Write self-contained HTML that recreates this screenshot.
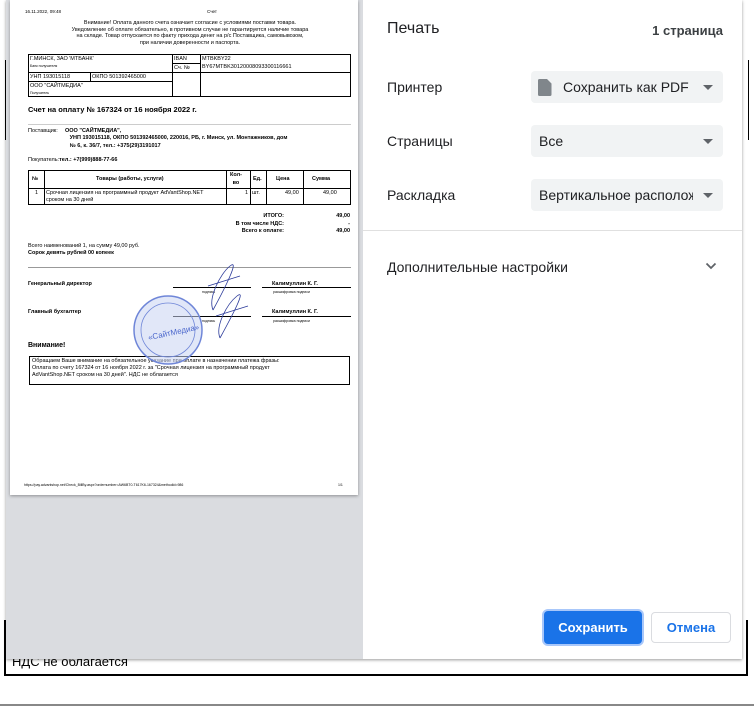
<!DOCTYPE html>
<html><head><meta charset="utf-8"><style>
*{margin:0;padding:0;box-sizing:border-box}
body{width:754px;height:706px;overflow:hidden;background:#fff;position:relative;font-family:"Liberation Sans",sans-serif;color:#202124}
.a{position:absolute;white-space:nowrap}
.doc{font-family:"Liberation Sans",sans-serif;color:#000}
.t{position:absolute;font-size:6px;line-height:7px;white-space:nowrap}
.b{font-weight:bold}
.bx{position:absolute;border:1px solid #000}
.sel{position:absolute;left:531px;width:192px;height:32px;background:#f1f3f4;border-radius:4px;font-size:14px;line-height:32px;padding-left:8px;color:#202124;overflow:hidden;white-space:nowrap}
.sel:after{content:"";position:absolute;right:10px;top:14px;border-left:5px solid transparent;border-right:5px solid transparent;border-top:5px solid #5f6368}
.lbl{position:absolute;left:387px;font-size:14px;color:#202124}
</style></head><body>
<div class="a" style="left:4px;top:620px;width:744px;height:56px;border:2px solid #000;border-top:none"></div>
<div class="a" style="left:12px;top:654px;font-size:13px;color:#000">НДС не облагается</div>
<div class="a" style="left:0;top:704px;width:754px;height:2px;background:#888"></div>
<div class="a" style="left:5px;top:60px;width:1px;height:80px;background:#000"></div>
<div class="a" style="left:748px;top:60px;width:1px;height:80px;background:#000"></div>
<div class="a" style="left:6px;top:0;width:736px;height:659px;background:#fff;box-shadow:0 1px 3px rgba(0,0,0,.4)"></div>
<div class="a" style="left:6px;top:0;width:357px;height:659px;background:#dadce0"></div>
<div class="a doc" style="left:10px;top:0;width:348px;height:495px;background:#fff;box-shadow:0 1px 3px rgba(0,0,0,.35)">
 <div class="t" style="left:15px;top:8px;font-size:4.5px">16.11.2022, 09:48</div>
 <div class="t" style="left:197px;top:8px;font-size:4.5px">Счет</div>
 <div class="t" style="left:20px;top:20px;width:320px;text-align:center;font-size:5.5px;line-height:6.7px;white-space:normal">Внимание! Оплата данного счета означает согласие с условиями поставки товара.<br>Уведомление об оплате обязательно, в противном случае не гарантируется наличие товара<br>на складе. Товар отпускается по факту прихода денег на р/с Поставщика, самовывозом,<br>при наличии доверенности и паспорта.</div>
 <div class="bx" style="left:18px;top:54px;width:323px;height:43px;border-width:1px"></div>
 <div class="a" style="left:162px;top:54px;width:1px;height:43px;background:#000"></div>
 <div class="a" style="left:190px;top:54px;width:1px;height:43px;background:#000"></div>
 <div class="a" style="left:18px;top:72px;width:323px;height:1px;background:#000"></div>
 <div class="a" style="left:162px;top:63px;width:28px;height:1px;background:#000"></div>
 <div class="a" style="left:18px;top:81px;width:144px;height:1px;background:#000"></div>
 <div class="a" style="left:80px;top:72px;width:1px;height:9px;background:#000"></div>
 <div class="t" style="left:20px;top:56px;font-size:5.5px">Г.МИНСК, ЗАО 'МТБАНК'</div>
 <div class="t" style="left:20px;top:63px;font-size:3.5px">Банк получателя</div>
 <div class="t" style="left:164px;top:56px;font-size:5.5px">IBAN</div>
 <div class="t" style="left:164px;top:65px;font-size:5.5px">Сч. №</div>
 <div class="t" style="left:192px;top:56px;font-size:5.5px">MTBKBY22</div>
 <div class="t" style="left:192px;top:64px;font-size:5.5px">BY67MTBK30120008093300116661</div>
 <div class="t" style="left:20px;top:74px;font-size:5.5px">УНП 193015118</div>
 <div class="t" style="left:82px;top:74px;font-size:5.5px">ОКПО 501392465000</div>
 <div class="t" style="left:20px;top:83px;font-size:5.5px">ООО "САЙТМЕДИА"</div>
 <div class="t" style="left:20px;top:90px;font-size:3.5px">Получатель</div>
 <div class="t b" style="left:18px;top:105px;font-size:7.5px;line-height:9px">Счет на оплату № 167324 от 16 ноября 2022 г.</div>
 <div class="a" style="left:18px;top:124px;width:323px;height:1px;background:#ccc"></div>
 <div class="t" style="left:18px;top:128px;font-size:5.5px">Поставщик:</div>
 <div class="t b" style="left:55px;top:128px;font-size:5.5px;line-height:7.3px">ООО "САЙТМЕДИА",<br>&nbsp; &nbsp;УНП 193015118, ОКПО 501392465000, 220016, РБ, г. Минск, ул. Монтажников, дом<br>&nbsp; &nbsp;№ 6, к. 36/7, тел.: +375(29)3191017</div>
 <div class="t" style="left:18px;top:157px;font-size:5.5px">Покупатель:<b>тел.: +7(999)888-77-66</b></div>
 <div class="bx" style="left:18px;top:170px;width:323px;height:35px"></div>
 <div class="a" style="left:18px;top:188px;width:323px;height:1px;background:#000"></div>
 <div class="a" style="left:34px;top:170px;width:1px;height:35px;background:#000"></div>
 <div class="a" style="left:216px;top:170px;width:1px;height:35px;background:#000"></div>
 <div class="a" style="left:240px;top:170px;width:1px;height:35px;background:#000"></div>
 <div class="a" style="left:256px;top:170px;width:1px;height:35px;background:#000"></div>
 <div class="a" style="left:293px;top:170px;width:1px;height:35px;background:#000"></div>
 <div class="t b" style="left:22px;top:176px;font-size:5.5px">№</div>
 <div class="t b" style="left:86px;top:176px;font-size:5.5px">Товары (работы, услуги)</div>
 <div class="t b" style="left:220px;top:171px;font-size:5.5px;line-height:8px;text-align:center">Кол-<br>во</div>
 <div class="t b" style="left:243px;top:176px;font-size:5.5px">Ед.</div>
 <div class="t b" style="left:266px;top:176px;font-size:5.5px">Цена</div>
 <div class="t b" style="left:302px;top:176px;font-size:5.5px">Сумма</div>
 <div class="t" style="left:25px;top:190px;font-size:5.5px">1</div>
 <div class="t" style="left:36px;top:190px;font-size:5.5px;line-height:6.5px">Срочная лицензия на программный продукт AdVantShop.NET<br>сроком на 30 дней</div>
 <div class="t" style="left:235px;top:190px;font-size:5.5px">1</div>
 <div class="t" style="left:242px;top:190px;font-size:5.5px">шт.</div>
 <div class="t" style="left:275px;top:190px;font-size:5.5px">49,00</div>
 <div class="t" style="left:313px;top:190px;font-size:5.5px">49,00</div>
 <div class="t b" style="left:180px;top:213px;width:94px;text-align:right;font-size:5.5px;line-height:7.7px">ИТОГО:<br>В том числе НДС:<br>Всего к оплате:</div>
 <div class="t b" style="left:300px;top:213px;width:40px;text-align:right;font-size:5.5px;line-height:7.7px">49,00<br>-<br>49,00</div>
 <div class="t" style="left:18px;top:243px;font-size:5.5px">Всего наименований 1, на сумму 49,00 руб.</div>
 <div class="t b" style="left:18px;top:250px;font-size:5.5px">Сорок девять рублей 00 копеек</div>
 <div class="a" style="left:18px;top:267px;width:323px;height:1px;background:#999"></div>
 <div class="t b" style="left:18px;top:281px;font-size:5.5px">Генеральный директор</div>
 <div class="a" style="left:163px;top:287px;width:78px;height:1px;background:#000"></div>
 <div class="a" style="left:252px;top:287px;width:89px;height:1px;background:#000"></div>
 <div class="t b" style="left:262px;top:281px;font-size:5.5px">Калимуллин К. Г.</div>
 <div class="t" style="left:192px;top:289px;font-size:3.5px">подпись</div>
 <div class="t" style="left:263px;top:289px;font-size:3.5px">расшифровка подписи</div>
 <div class="t b" style="left:18px;top:309px;font-size:5.5px">Главный бухгалтер</div>
 <div class="a" style="left:163px;top:316px;width:78px;height:1px;background:#000"></div>
 <div class="a" style="left:252px;top:316px;width:89px;height:1px;background:#000"></div>
 <div class="t b" style="left:262px;top:309px;font-size:5.5px">Калимуллин К. Г.</div>
 <div class="t" style="left:192px;top:318px;font-size:3.5px">подпись</div>
 <div class="t" style="left:263px;top:318px;font-size:3.5px">расшифровка подписи</div>
 <div class="t b" style="left:18px;top:342px;font-size:7px;line-height:8px">Внимание!</div>
 <div class="bx" style="left:19px;top:356px;width:321px;height:29px"></div>
 <div class="t" style="left:22px;top:358px;font-size:5.5px;line-height:7px">Обращаем Ваше внимание на обязательное указание при оплате в назначении платежа фразы:<br>Оплата по счету 167324 от 16 ноября 2022 г. за "Срочная лицензия на программный продукт<br>AdVantShop.NET сроком на 30 дней". НДС не облагается</div>
 <svg class="a" style="left:120px;top:258px" width="120" height="120" viewBox="0 0 120 120">
  <circle cx="38" cy="72" r="34" fill="#c9d4f2" fill-opacity=".55" stroke="#6f86d8" stroke-width="1.5"/>
  <circle cx="38" cy="72" r="27" fill="none" stroke="#6f86d8" stroke-width=".8"/>
  <text x="17" y="78" font-family="Liberation Sans" font-size="8" fill="#4a66cc" transform="rotate(-12 38 72)">«СайтМедиа»</text>
  <path d="M83 52 C95 30 110 0 100 8 C90 16 78 40 83 52 M78 28 L110 18" stroke="#2b3a9a" fill="none" stroke-width=".8"/>
  <path d="M90 80 C102 58 117 30 107 38 C97 46 85 68 90 80 M86 58 L118 48" stroke="#2b3a9a" fill="none" stroke-width=".8"/>
 </svg>
 <div class="t" style="left:14px;top:482px;font-size:3.5px">https://pay.advantshop.net/Check_BillBy.aspx?ordernumber=AW6BT0-T617K6-167324&amp;methodid=986</div>
 <div class="t" style="left:328px;top:482px;font-size:3.5px">1/1</div>
</div>
<div class="a" style="left:387px;top:20px;font-size:16px;color:#202124">Печать</div>
<div class="a" style="left:600px;top:23px;width:123px;text-align:right;font-size:13px;font-weight:bold;color:#3c4043">1 страница</div>
<div class="lbl" style="top:79px">Принтер</div>
<div class="lbl" style="top:133px">Страницы</div>
<div class="lbl" style="top:187px">Раскладка</div>
<div class="sel" style="top:71px;padding-left:32px">Сохранить как PDF</div>
<svg class="a" style="left:538px;top:79px" width="14" height="17" viewBox="0 0 14 17"><path d="M1.5 0H9l4.5 4.5V15.5a1.5 1.5 0 0 1-1.5 1.5H1.5A1.5 1.5 0 0 1 0 15.5V1.5A1.5 1.5 0 0 1 1.5 0z" fill="#80868b"/></svg>
<div class="sel" style="top:125px">Все</div>
<div class="sel" style="top:179px"><span style="display:inline-block;width:154px;overflow:hidden;white-space:nowrap;vertical-align:top">Вертикальное расположение</span></div>
<div class="a" style="left:363px;top:230px;width:379px;height:1px;background:#e0e0e0"></div>
<div class="a" style="left:387px;top:259px;font-size:14px;color:#202124">Дополнительные настройки</div>
<svg class="a" style="left:705px;top:262px" width="12" height="8" viewBox="0 0 12 8"><path d="M1.5 1.5L6 6l4.5-4.5" stroke="#5f6368" stroke-width="1.8" fill="none"/></svg>
<div class="a" style="left:544px;top:611px;width:98px;height:33px;background:#1a73e8;border-radius:4px;box-shadow:0 0 0 2px #a8c7fa;color:#fff;font-size:13px;font-weight:bold;text-align:center;line-height:33px">Сохранить</div>
<div class="a" style="left:651px;top:612px;width:80px;height:31px;border:1px solid #dadce0;border-radius:4px;color:#1a73e8;font-size:13px;font-weight:bold;text-align:center;line-height:29px">Отмена</div>
</body></html>
